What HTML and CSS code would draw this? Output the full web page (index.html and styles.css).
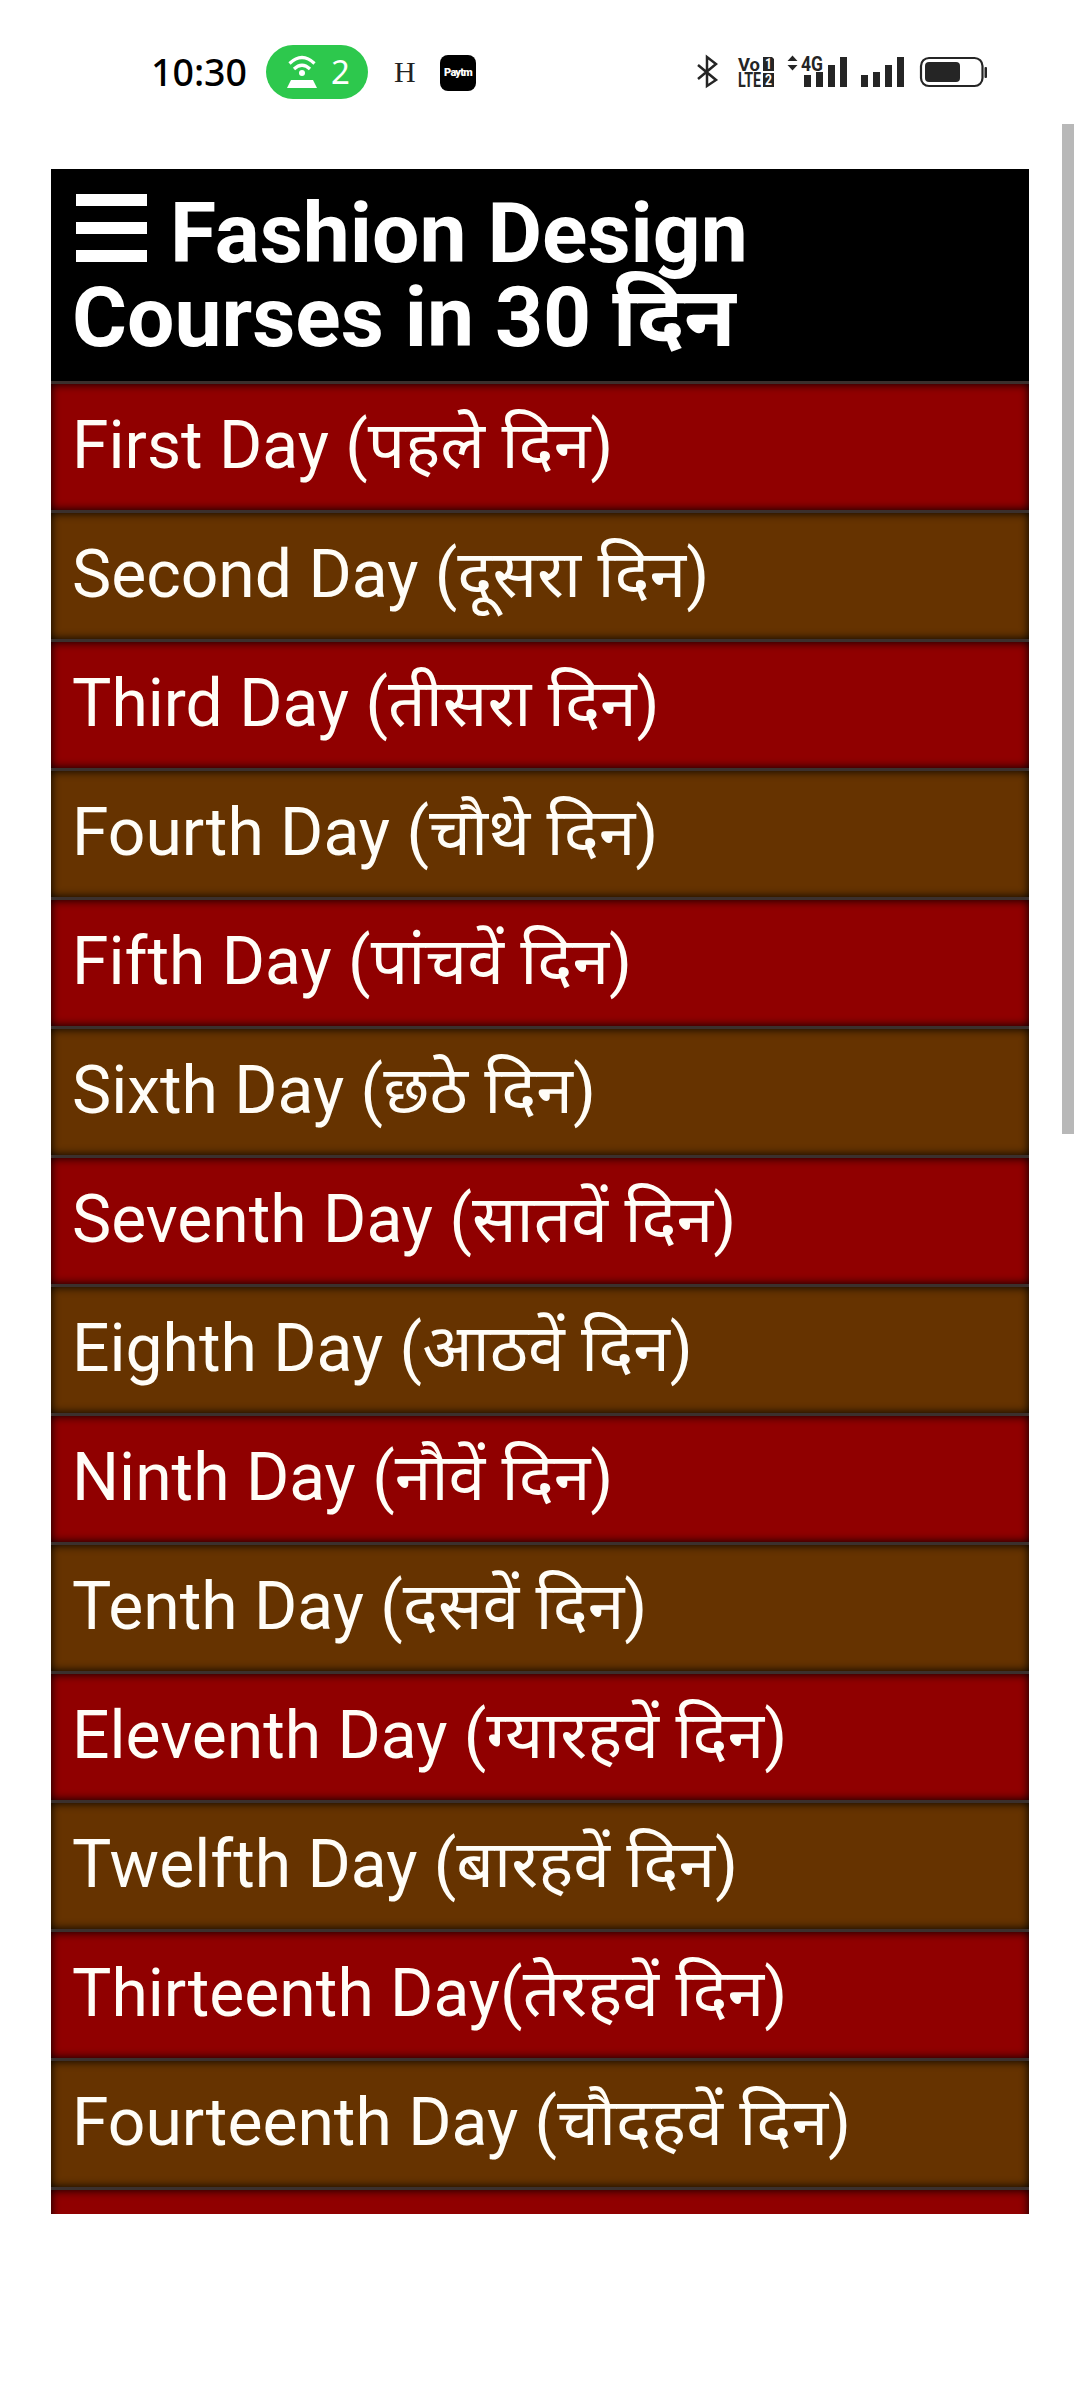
FILE: index.html
```html
<!DOCTYPE html>
<html lang="hi">
<head>
<meta charset="utf-8">
<title>Fashion Design Courses</title>
<link rel="stylesheet" href="styles.css">
</head>
<body>
<header class="status">
  <span class="time">10:30</span>
  <span class="hotspot">
    <svg width="30" height="34" viewBox="0 0 30 34" fill="none" stroke="#fff" stroke-width="3.2"><path d="M2.5 8.5Q15-3.5 27.500 8.500M7 14Q15 6.500 23 14"/><circle cx="15" cy="18" r="3" fill="#fff" stroke="none"/><path d="M4 25H26L30 33H0Z" fill="#fff" stroke="none"/></svg>
    <span>2</span>
  </span>
  <span class="letter">H</span>
  <span class="paytm">Paytm</span>
  <span class="signals">
    <svg width="292" height="40" viewBox="0 0 292 40" fill="#252525">
      <path d="M1 11 19 26 10 32V3L19 10 1 25" fill="none" stroke="#252525" stroke-width="2.500"/>
      <path d="M66 3H75L77 5V17H66ZM66 19H77V33H66Z"/>
      <g class="net"><text x="41" y="17" font-size="19" textLength="22" lengthAdjust="spacingAndGlyphs">Vo</text><text x="41" y="33" font-size="19.500" textLength="23" lengthAdjust="spacingAndGlyphs">LTE</text><text class="inv" x="68" y="15" font-size="14" textLength="7" lengthAdjust="spacingAndGlyphs">1</text><text class="inv" x="68" y="31" font-size="14" textLength="7" lengthAdjust="spacingAndGlyphs">2</text><text x="104" y="17" font-size="20" textLength="22" lengthAdjust="spacingAndGlyphs">4G</text></g>
      <path d="M90.500 7 95.500 1.500 100.500 7ZM90.500 11 95.500 16.500 100.500 11Z"/>
      <path d="M107 21h7v12h-7zM119 18h7v15h-7zM131 11h7v22h-7zM143 3h7v30h-7zM164 21h7v12h-7zM176 18h7v15h-7zM188 11h7v22h-7zM200 3h7v30h-7z"/>
      <rect x="224" y="4" width="61.500" height="28" rx="8" fill="none" stroke="#252525" stroke-width="2.200"/><rect x="228" y="8" width="35" height="20" rx="4"/><rect x="287.500" y="13" width="2.500" height="11" rx="1"/>
    </svg>
  </span>
</header>
<main class="viewport">
  <nav class="menu">
    <h1 class="title"><svg class="bars" width="71" height="68" viewBox="0 0 71 68"><path d="M0 0H71V12H0ZM0 28H71V40H0ZM0 56H71V68H0Z" fill="#fff"/></svg>Fashion Design<br>Courses in 30 <span>दिन</span></h1>
    <ul class="days">
      <li>First Day (पहले दिन)</li>
      <li>Second Day (दूसरा दिन)</li>
      <li>Third Day (तीसरा दिन)</li>
      <li>Fourth Day (चौथे दिन)</li>
      <li>Fifth Day (पांचवें दिन)</li>
      <li>Sixth Day (छठे दिन)</li>
      <li>Seventh Day (सातवें दिन)</li>
      <li>Eighth Day (आठवें दिन)</li>
      <li>Ninth Day (नौवें दिन)</li>
      <li>Tenth Day (दसवें दिन)</li>
      <li>Eleventh Day (ग्यारहवें दिन)</li>
      <li>Twelfth Day (बारहवें दिन)</li>
      <li>Thirteenth Day(तेरहवें दिन)</li>
      <li>Fourteenth Day (चौदहवें दिन)</li>
      <li></li>
    </ul>
  </nav>
  <div class="scrollbar"></div>
</main>
</body>
</html>
```
FILE: styles.css
```css
* { box-sizing: border-box; }
body { margin: 0; height: 2400px; background: #fff; overflow: hidden; font-family: Roboto, "Noto Sans", "Noto Sans Devanagari", sans-serif; }
.status { height: 124px; padding: 45px 0 0 151px; display: flex; align-items: flex-start; color: #000; }
.time { width: 115px; font: 500 37.5px/54px "Noto Sans", sans-serif; }
.hotspot { width: 102px; height: 54px; border-radius: 27px; background: #2dc84d; color: #fff; display: flex; align-items: center; padding-left: 21px; gap: 14px; font: 33px/54px "Noto Sans", sans-serif; }
.letter { width: 46px; margin-left: 26px; font: 30px/54px "Liberation Serif", serif; color: #222; }
.paytm { width: 36px; height: 36px; margin-top: 10px; border-radius: 8px; background: #000; color: #fff; font: 900 11px/36px Roboto, sans-serif; letter-spacing: -.8px; text-align: center; }
.signals { margin-left: 221px; margin-top: 9px; height: 40px; }
.signals svg { display: block; }
.net { font-family: Roboto, sans-serif; font-weight: 700; }
.inv { fill: #fff; }
.viewport { display: flex; padding: 0 6px 0 51px; justify-content: space-between; align-items: flex-start; }
.menu { width: 978px; height: 2045px; margin-top: 45px; overflow: hidden; background: #000; color: #fff; }
.title { margin: 0; height: 212px; padding: 23px 21px; font-size: 84px; line-height: 84px; font-weight: 700; white-space: nowrap; }
.bars { margin: 0 23px 0 4px; }
.days { margin: 0; padding: 0; list-style: none; }
.days li { height: 129px; border-top: 3px solid #3b302d; padding: 23px 21px; font-size: 66px; line-height: 78px; white-space: nowrap; background: #663300; color: #fffdf7; box-shadow: inset 0 0 10px #000; }
.days li:nth-child(odd) { background: #900000; }
.scrollbar { width: 12px; height: 1010px; background: #b8b8b8; }
```
